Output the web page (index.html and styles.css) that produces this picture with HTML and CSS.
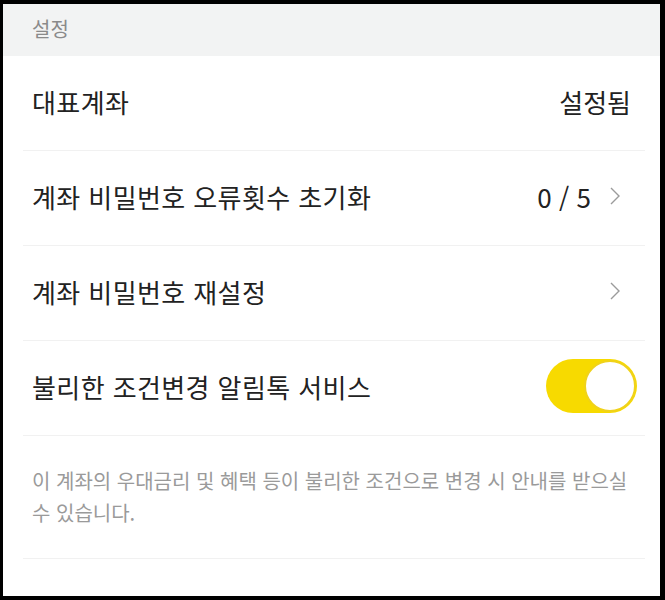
FILE: index.html
```
<!DOCTYPE html>
<html lang="ko">
<head>
    <meta charset="UTF-8">
    <meta name="viewport" content="width=device-width, initial-scale=1.0">
    <title>설정</title>
    <link rel="stylesheet" href="styles.css">
</head>
<body>
    <div class="screen">
        <div class="section-title">설정</div>

        <div class="list">
            <div class="row">
                <span class="label">대표계좌</span>
                <span class="value">설정됨</span>
            </div>
            <div class="row">
                <span class="label">계좌 비밀번호 오류횟수 초기화</span>
                <span class="value with-arrow">0 / 5</span>
                <svg class="chevron" viewBox="0 0 12 20" width="12" height="20">
                    <path d="M2 2 L10 10 L2 18" fill="none" stroke="#9b9b9b" stroke-width="1.4"/>
                </svg>
            </div>
            <div class="row">
                <span class="label">계좌 비밀번호 재설정</span>
                <svg class="chevron" viewBox="0 0 12 20" width="12" height="20">
                    <path d="M2 2 L10 10 L2 18" fill="none" stroke="#9b9b9b" stroke-width="1.4"/>
                </svg>
            </div>
            <div class="row">
                <span class="label">불리한 조건변경 알림톡 서비스</span>
                <div class="toggle on"><span class="knob"></span></div>
            </div>
            <div class="desc">
                이 계좌의 우대금리 및 혜택 등이 불리한 조건으로 변경 시 안내를 받으실 수 있습니다.
            </div>
        </div>
    </div>
</body>
</html>
```

FILE: styles.css
```
* {
    box-sizing: border-box;
}
html, body {
    margin: 0;
    padding: 0;
    background: #000;
}
body {
    font-family: "Noto Sans CJK KR", "Noto Sans", sans-serif;
}
.screen {
    width: 665px;
    height: 600px;
    background: #fff;
    border: 4px solid #000;
    border-left-width: 3px;
    border-right-width: 5px;
    overflow: hidden;
}
.section-title {
    height: 52px;
    line-height: 50px;
    padding-left: 29px;
    background: #f2f3f3;
    color: #8a8a8a;
    font-size: 20px;
}
.list {
    padding: 0 15px 0 20px;
}
.row {
    display: flex;
    align-items: center;
    height: 95px;
    padding: 0 8px 4px 9px;
    border-bottom: 1px solid #f1f1f1;
}
.label {
    flex: 1;
    font-size: 26px;
    letter-spacing: 0.4px;
    color: #222;
}
.value {
    font-size: 26px;
    color: #222;
    margin-right: 6px;
}
.value.with-arrow {
    margin-right: 18px;
}
.chevron {
    margin-right: 16px;
}
.toggle {
    position: relative;
    width: 91px;
    height: 54px;
    border-radius: 27px;
    background: #f7da00;
}
.toggle .knob {
    position: absolute;
    top: 1px;
    right: 1px;
    width: 52px;
    height: 52px;
    border-radius: 50%;
    background: #fff;
    border: 2px solid #f0d21a;
}
.desc {
    padding: 29px 4px 29px 9px;
    font-size: 20px;
    line-height: 32px;
    color: #9a9a9a;
    border-bottom: 1px solid #f1f1f1;
}
```
